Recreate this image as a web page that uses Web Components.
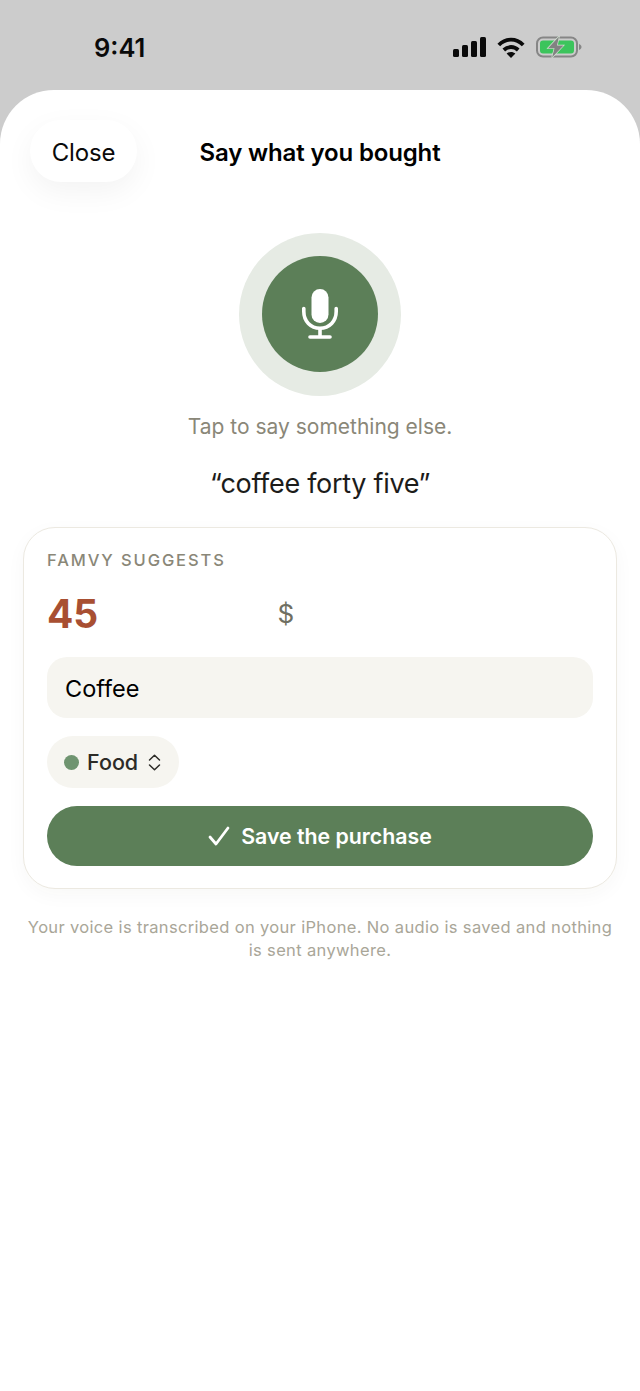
<!DOCTYPE html>
<html lang="en"><head><meta charset="utf-8"><title>Say what you bought</title>
<style>
html,body{margin:0;padding:0;background:#ccc;font-family:Inter,"Noto Sans",sans-serif}
body{width:640px;height:1391px;overflow:hidden;display:flex;flex-direction:column}
</style></head><body>
<status-bar></status-bar>
<voice-sheet>
  <sheet-header slot="header" title="Say what you bought"></sheet-header>
  <mic-button></mic-button>
  <p-hint>Tap to say something else.</p-hint>
  <heard-quote>“coffee forty five”</heard-quote>
  <suggest-card>
    <amount-row amount="45" currency="$"></amount-row>
    <name-field>Coffee</name-field>
    <category-pill>Food</category-pill>
    <save-button>Save the purchase</save-button>
  </suggest-card>
  <privacy-note>Your voice is transcribed on your iPhone. No audio is saved and nothing is sent anywhere.</privacy-note>
</voice-sheet>
<script>
function def(name,html,init){
  customElements.define(name,class extends HTMLElement{
    constructor(){super();this.attachShadow({mode:'open'}).innerHTML=html;}
    connectedCallback(){if(init)init(this);}
  });
}
def('status-bar',`<style>
:host{display:flex;height:90px;flex:none;align-items:flex-start;justify-content:space-between;box-sizing:border-box;padding:31px 58px 0 94px;background:#ccc}
.t{font-size:25.5px;font-weight:600;line-height:34px;color:#0a0a0a;letter-spacing:0}
.i{display:flex;align-items:center;gap:11px;margin-top:5px}
svg{display:block}
</style><span class="t">9:41</span><span class="i">
<svg width="33" height="20" viewBox="0 0 33 20" fill="#0a0a0a"><rect x="0" y="12" width="6" height="8" rx="1.5"/><rect x="9" y="8" width="6" height="12" rx="1.5"/><rect x="18" y="4" width="6" height="16" rx="1.5"/><rect x="27" y="0" width="6" height="20" rx="1.5"/></svg>
<svg width="28" height="21" viewBox="0 0 28 21" fill="none" stroke="#0a0a0a" stroke-width="3.8"><path d="M1.800 8C8.800 .8 19.200 .8 26.200 8"/><path d="M6.800 13C11 9 17 9 21.200 13"/><path d="M14 21 9.600 16.600C12 14.400 16 14.400 18.400 16.600Z" fill="#0a0a0a" stroke="none"/></svg>
<svg width="46" height="22" viewBox="0 0 46 22"><rect x="1" y="1.500" width="40" height="19" rx="6" fill="none" stroke="#868686" stroke-width="2"/><rect x="4" y="4.500" width="34" height="13" rx="3" fill="#3cc45c"/><path d="M43 8c1.500.5 2.500 1.700 2.500 3s-1 2.500-2.500 3z" fill="#868686"/><path d="M23 .5 12 12.200H18.500L16 21.500 27.500 9.500H21z" fill="#828282" stroke="#d6e6d6" stroke-width="1.300" paint-order="stroke"/></svg>
</span>`);
def('voice-sheet',`<style>
:host{display:flex;flex-direction:column;align-items:center;flex:1;background:#fff;border-radius:54px 54px 0 0;overflow:hidden}
</style><slot name="header"></slot><slot></slot>`);
def('sheet-header',`<style>
:host{display:block;position:relative;width:100%;box-sizing:border-box;padding:30px 30px 0;height:143px;flex:none}
.c{display:block;width:107px;height:62px;border-radius:31px;background:#fff;box-shadow:0 10px 30px rgba(0,0,0,.05);font-size:24px;line-height:65px;text-align:center;color:#0a0a0a;letter-spacing:-.15px}
.t{position:absolute;left:0;right:0;top:30px;line-height:65px;text-align:center;font-size:24px;font-weight:600;color:#000;letter-spacing:-.15px}
</style><span class="c">Close</span><span class="t"></span>`,el=>{el.shadowRoot.querySelector('.t').textContent=el.getAttribute('title')});
def('mic-button',`<style>
:host{display:flex;flex:none;width:162px;height:163px;border-radius:50%;background:#e6ebe4;align-items:center;justify-content:center}
.in{width:116px;height:116px;margin-bottom:1px;border-radius:50%;background:#5c7f58;display:flex;align-items:center;justify-content:center}
svg{display:block}
</style><div class="in"><svg width="38" height="52" viewBox="0 0 38 52" fill="none"><rect x="10.500" y="1" width="17" height="34" rx="8.500" fill="#fff"/><path d="M2.800 20.500V23.500C2.800 33 9.500 40.200 19 40.200S35.200 33 35.200 23.500V20.500" stroke="#fff" stroke-width="3.600" stroke-linecap="round"/><path d="M19 40V48" stroke="#fff" stroke-width="3.600"/><path d="M9 49H29" stroke="#fff" stroke-width="3.600" stroke-linecap="round"/></svg></div>`);
def('p-hint',`<style>:host{display:block;flex:none;margin-top:15px;font-size:21px;line-height:32px;color:#8a8778;letter-spacing:0}</style><slot></slot>`);
def('heard-quote',`<style>:host{display:block;flex:none;margin-top:21px;font-size:27px;line-height:40px;color:#1c1c1a;letter-spacing:-.3px}</style><slot></slot>`);
def('suggest-card',`<style>
:host{display:block;flex:none;box-sizing:border-box;width:594px;height:362px;margin-top:23px;padding:21px 23px 0 23px;background:#fff;border:1px solid #ece9e1;border-radius:32px;box-shadow:0 6px 20px rgba(60,50,20,.035)}
.l{font-size:16.500px;line-height:22px;font-weight:500;letter-spacing:1.900px;color:#8a8778}
</style><div class="l">FAMVY SUGGESTS</div><slot></slot>`);
def('amount-row',`<style>
:host{display:flex;align-items:center;height:46px;margin-top:20px}
.a{width:230.500px;font-size:39px;font-weight:700;color:#a84f32;line-height:46px}
.c{font-size:26px;color:#6f6f62;line-height:46px}
</style><span class="a"></span><span class="c"></span>`,el=>{const s=el.shadowRoot;s.querySelector('.a').textContent=el.getAttribute('amount');s.querySelector('.c').textContent=el.getAttribute('currency')});
def('name-field',`<style>
:host{display:block;box-sizing:border-box;height:61px;margin-top:20px;padding:0 18px;border-radius:20px;background:#f6f5f0;font-size:23.500px;line-height:63px;color:#000}
</style><slot></slot>`);
def('category-pill',`<style>
:host{display:flex;align-items:center;width:132px;height:52px;box-sizing:border-box;margin-top:18px;padding-left:17px;border-radius:26px;background:#f6f5f0;font-size:21.500px;font-weight:500;color:#2c2b27}
.d{width:15px;height:15px;border-radius:50%;background:#6f9470;margin-right:8px;flex:none}
svg{display:block;margin-left:10px}
</style><span class="d"></span><slot></slot><svg width="13" height="17" viewBox="0 0 13 17" fill="none" stroke="#2c2b27" stroke-width="1.500" stroke-linecap="round" stroke-linejoin="round"><path d="M1.500 6 6.500 1.200 11.500 6"/><path d="M1.500 11 6.500 15.800 11.500 11"/></svg>`);
def('save-button',`<style>
:host{display:flex;align-items:center;justify-content:center;height:60px;margin-top:18px;border-radius:30px;background:#5c7f58;color:#fff;font-size:21.300px;font-weight:600}
svg{display:block;margin-right:11px}
</style><svg width="22" height="20" viewBox="0 0 22 20" fill="none" stroke="#fff" stroke-width="2.800" stroke-linecap="round" stroke-linejoin="round"><path d="M2 11 8 18 20 2"/></svg><slot></slot>`);
def('privacy-note',`<style>:host{display:block;flex:none;box-sizing:border-box;width:596px;margin-top:27px;text-align:center;font-size:16.500px;line-height:23px;letter-spacing:.34px;color:#a9a698}</style><slot></slot>`);
</script>
</body></html>
